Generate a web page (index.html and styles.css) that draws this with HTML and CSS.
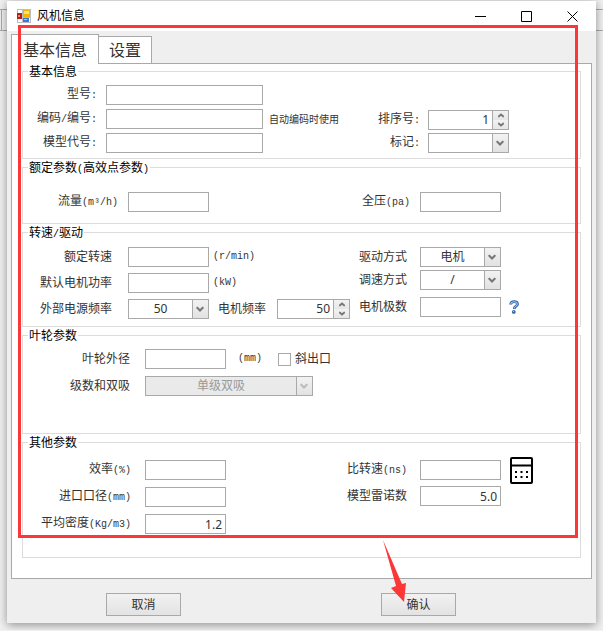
FILE: index.html
```html
<!DOCTYPE html>
<html lang="zh-CN">
<head>
<meta charset="utf-8">
<meta name="viewport" content="width=device-width, initial-scale=1">
<title>风机信息</title>
<link rel="stylesheet" href="styles.css">
</head>
<body>
<svg class="defs" aria-hidden="true">
  <symbol id="chevron" viewBox="0 0 8 6"><path d="M1 1v1l3 3 3-3V1M1 1l3 3 3-3" fill="none" stroke="currentColor" stroke-width="1.4"/></symbol>
  <symbol id="up" viewBox="0 0 6 5"><path d="M.6 4.200V3L3 .9 5.400 3v1.200M.6 4L3 2l2.400 2" fill="none" stroke="currentColor" stroke-width="1.1"/></symbol>
  <symbol id="down" viewBox="0 0 6 5"><path d="M.6 .8V2L3 4.100 5.400 2V.8M.6 1L3 3l2.400-2" fill="none" stroke="currentColor" stroke-width="1.1"/></symbol>
</svg>
<main class="dialog">
  <header class="titlebar">
    <svg class="app-icon" viewBox="0 0 14 14" aria-hidden="true">
      <rect width="14" height="14" fill="#b9bcc0"/>
      <rect x="1" y="1" width="4" height="3" fill="#fff"/>
      <rect x="1" y="10" width="4" height="3" fill="#fff"/>
      <rect x="6" y="1" width="7" height="7" fill="#f5b800"/>
      <rect x="7" y="2" width="5" height="3" fill="#ffe07a"/>
      <rect x="0" y="4" width="5" height="6" fill="#c01c10"/>
      <rect x="1" y="6" width="2" height="2" fill="#f08070"/>
      <rect x="6" y="9" width="6" height="4" fill="#3c78dc"/>
      <rect x="7" y="10" width="3" height="1" fill="#9cc4ff"/>
      <rect x="12" y="9" width="1" height="4" fill="#fff"/>
    </svg>
    <h1 class="title">风机信息</h1>
    <button class="winbtn" type="button" aria-label="最小化"><svg viewBox="0 0 11 11"><path d="M0 5.500h11"/></svg></button>
    <button class="winbtn" type="button" aria-label="最大化"><svg viewBox="0 0 11 11"><path d="M.5.5h10v10H.5z"/></svg></button>
    <button class="winbtn" type="button" aria-label="关闭"><svg viewBox="0 0 11 11"><path d="M.5.5l10 10M10.500.5l-10 10"/></svg></button>
  </header>

  <form class="body">
    <div class="tabs" role="tablist">
      <button class="tab tab-active" type="button" role="tab" aria-selected="true">基本信息</button>
      <button class="tab" type="button" role="tab" aria-selected="false">设置</button>
    </div>

    <div class="panel" role="tabpanel">
      <fieldset class="group basic">
        <legend>基本信息</legend>
        <div class="cols">
          <div class="col">
            <div class="row"><label for="model">型号<span class="lat">:</span></label><input class="box wide" id="model" type="text"></div>
            <div class="row"><label for="code">编码<span class="lat">/</span>编号<span class="lat">:</span></label><input class="box wide" id="code" type="text"><span class="note">自动编码时使用</span></div>
            <div class="row"><label for="alias">模型代号<span class="lat">:</span></label><input class="box wide" id="alias" type="text"></div>
          </div>
          <div class="col side">
            <div class="row"><label for="order">排序号<span class="lat">:</span></label>
              <span class="spin"><input id="order" type="number" value="1"><span class="steps"><button type="button" aria-label="增加"><svg><use href="#up"/></svg></button><button type="button" aria-label="减少"><svg><use href="#down"/></svg></button></span></span></div>
            <div class="row"><label for="mark">标记<span class="lat">:</span></label>
              <span class="combo"><select id="mark"><option></option></select><svg><use href="#chevron"/></svg></span></div>
          </div>
        </div>
      </fieldset>

      <fieldset class="group rated">
        <legend>额定参数<span class="lat">(</span>高效点参数<span class="lat">)</span></legend>
        <div class="cols">
          <div class="col">
            <div class="row"><label for="flow">流量<span class="lat">(m³/h)</span></label><input class="box" id="flow" type="text"></div>
          </div>
          <div class="col side">
            <div class="row"><label for="pressure">全压<span class="lat">(pa)</span></label><input class="box" id="pressure" type="text"></div>
          </div>
        </div>
      </fieldset>

      <fieldset class="group drive">
        <legend>转速<span class="lat">/</span>驱动</legend>
        <div class="cols">
          <div class="col">
            <div class="row"><label for="speed">额定转速</label><input class="box" id="speed" type="text"><span class="unit lat">(r/min)</span></div>
            <div class="row"><label for="power">默认电机功率</label><input class="box" id="power" type="text"><span class="unit lat">(kW)</span></div>
            <div class="row"><label for="supply">外部电源频率</label>
              <span class="combo"><select id="supply"><option>50</option></select><svg><use href="#chevron"/></svg></span>
              <label class="inline" for="freq">电机频率</label>
              <span class="spin small"><input id="freq" type="number" value="50"><span class="steps"><button type="button" aria-label="增加"><svg><use href="#up"/></svg></button><button type="button" aria-label="减少"><svg><use href="#down"/></svg></button></span></span></div>
          </div>
          <div class="col side">
            <div class="row"><label for="mode">驱动方式</label>
              <span class="combo"><select id="mode"><option>电机</option></select><svg><use href="#chevron"/></svg></span></div>
            <div class="row"><label for="regulate">调速方式</label>
              <span class="combo"><select id="regulate"><option>/</option></select><svg><use href="#chevron"/></svg></span></div>
            <div class="row apart"><label for="poles">电机极数</label><input class="box" id="poles" type="text">
              <svg class="help" viewBox="0 0 10 14" role="img" aria-label="帮助">
                <path d="M1.700 4.500C1.600 2.500 3 1.600 5 1.600s3.500.9 3.500 2.600C8.500 6.200 5.200 6.300 5.200 9" fill="none" stroke="#2f62a8" stroke-width="2.800"/>
                <path d="M1.800 4C2 2.500 3 1.700 5 1.700s3.300.9 3.300 2.400C8.300 6 5.200 6.300 5.200 8.600" fill="none" stroke="#9cc3ee" stroke-width="1.100"/>
                <circle cx="4.800" cy="11.900" r="1.900" fill="#2f62a8"/><circle cx="4.500" cy="11.500" r=".7" fill="#9cc3ee"/>
              </svg></div>
          </div>
        </div>
      </fieldset>

      <fieldset class="group impeller">
        <legend>叶轮参数</legend>
        <div class="col">
          <div class="row"><label for="diameter">叶轮外径</label><input class="box" id="diameter" type="text"><span class="unit far lat">(mm)</span><input class="tick" id="oblique" type="checkbox"><label class="ticklabel" for="oblique">斜出口</label></div>
          <div class="row"><label for="stage">级数和双吸</label>
            <span class="combo long"><select id="stage" disabled><option>单级双吸</option></select><svg><use href="#chevron"/></svg></span></div>
        </div>
      </fieldset>

      <fieldset class="group other">
        <legend>其他参数</legend>
        <div class="cols">
          <div class="col">
            <div class="row"><label for="eff">效率<span class="lat">(%)</span></label><input class="box" id="eff" type="text"></div>
            <div class="row"><label for="inlet">进口口径<span class="lat">(mm)</span></label><input class="box" id="inlet" type="text"></div>
            <div class="row"><label for="density">平均密度<span class="lat">(Kg/m3)</span></label><input class="box" id="density" type="text" value="1.2"></div>
          </div>
          <div class="col side">
            <div class="row"><label for="ns">比转速<span class="lat">(ns)</span></label><input class="box" id="ns" type="text">
              <button class="calc" type="button" aria-label="计算"><svg viewBox="0 0 23 27">
                <rect x="1" y="1" width="21" height="25" rx="1" fill="#fff" stroke="#000" stroke-width="2"/>
                <path d="M2 8.500h19" stroke="#000" stroke-width="2"/>
                <path d="M5 15h2m3.500 0h2m3.500 0h2M5 20h2m3.500 0h2m3.500 0h2" stroke="#000" stroke-width="2"/>
              </svg></button></div>
            <div class="row"><label for="reynolds">模型雷诺数</label><input class="box" id="reynolds" type="text" value="5.0"></div>
          </div>
        </div>
      </fieldset>
    </div>

    <footer class="actions">
      <button class="action" type="button">取消</button>
      <button class="action" type="submit">确认</button>
    </footer>
  </form>

  <div class="marker" aria-hidden="true"></div>
  <svg class="pointer" viewBox="0 0 26 62" aria-hidden="true"><path d="M2 0L21 44l4-1-2 19L10 48l5-2z" fill="#fc3737"/></svg>
</main>
</body>
</html>
```

FILE: styles.css
```css
* { box-sizing: border-box; }

body {
  margin: 0;
  padding: 1px 7px 7px;
  background:
    linear-gradient(#a9a9a9, #a9a9a9) 0 9px / 100% 1px no-repeat,
    linear-gradient(#a9a9a9, #a9a9a9) 0 30px / 100% 1px no-repeat,
    linear-gradient(#a9a9a9, #a9a9a9) 1px 10px / 1px 20px no-repeat,
    #f0f0f0;
  font: 12px/16px "Noto Sans", "Noto Sans CJK SC", sans-serif;
  color: #333;
}

button, input, select { font: inherit; color: inherit; }
button { padding: 0; }
.defs { display: none; }

.dialog {
  position: relative;
  background: #efefef;
  box-shadow: 0 2px 9px rgba(0, 0, 0, .4);
}

.titlebar {
  display: flex;
  align-items: center;
  height: 30px;
  padding: 0 1px 0 10px;
  background: #fff;
}
.app-icon { width: 14px; height: 14px; }
.title { flex: 1; margin: 0 0 0 6px; font-size: 12px; font-weight: 400; color: #000; }
.winbtn {
  display: flex;
  align-items: center;
  justify-content: center;
  width: 46px;
  height: 30px;
  border: 0;
  background: none;
}
.winbtn svg { width: 11px; height: 11px; fill: none; stroke: #000; }

.body { padding: 3px 4px 7px; }

.tabs { display: flex; align-items: flex-end; }
.tab {
  height: 27px;
  padding: 0 10px;
  border: 1px solid #a9a9a9;
  border-left: 0;
  border-bottom: 0;
  background: #fff;
  font-size: 16px;
  line-height: 24px;
}
.tab-active {
  position: relative;
  height: 30px;
  margin-bottom: -1px;
  padding: 0 11px;
  border-left: 1px solid #a9a9a9;
}

.panel { padding: 0 10px 20px; border: 1px solid #a9a9a9; background: #fff; }

.group { min-width: 0; margin: 0; padding: 0; border: 1px solid #dcdcdc; }
.group + .group { margin-top: 1px; }
legend { height: 15px; margin-left: 5px; padding: 0 1px; line-height: 15px; color: #000; }

.cols { display: grid; grid-template-columns: minmax(0, 1fr) 237px; }
.col { display: flex; flex-direction: column; gap: 6px; }
.row { display: flex; align-items: center; height: 20px; }
.row > label:first-child {
  flex: none;
  width: 89px;
  margin-right: 16px;
  text-align: right;
  white-space: nowrap;
}
.side .row > label:first-child { width: 64px; margin-right: 13px; }
.apart { margin-top: 4px; }

.basic .cols { padding: 6px 0 5px; }
.basic .col { gap: 4px; }
.basic .row > label:first-child { width: 74px; margin-right: 9px; }
.basic .side { gap: 3px; padding-top: 25px; }
.basic .side .row > label:first-child { width: 77px; margin-right: 8px; }

.rated .cols { padding: 17px 0 11px; }
.rated .row > label:first-child { width: 95px; margin-right: 10px; }
.rated .side .row > label:first-child { width: 67px; margin-right: 10px; }

.drive .cols { padding: 7px 0; }
.drive .side { gap: 3px; }

.impeller .col { gap: 7px; padding: 6px 0 37px; }
.impeller .row > label:first-child { width: 107px; margin-right: 15px; }

.other .cols { padding: 10px 0 23px; }
.other .col { gap: 7px; }
.other .side { gap: 6px; }
.other .row > label:first-child { width: 108px; margin-right: 14px; }
.other .side .row > label:first-child { width: 64px; margin-right: 13px; }

.lat { font-family: "Liberation Mono", monospace; font-size: 10px; }
.note { margin-left: 6px; font-size: 10px; white-space: nowrap; }
.unit { margin-left: 4px; }
.unit.far { margin-left: 12px; }
.row > .inline { flex: none; margin: 0 11px 0 9px; white-space: nowrap; }

.box, .combo, .spin {
  flex: none;
  width: 81px;
  height: 20px;
  border: 1px solid #a9a9a9;
  border-radius: 0;
  background: #fff;
}
.box { padding: 0 3px; text-align: right; }
.wide { width: 157px; }
.small { width: 73px; }
.long { width: 168px; }

.combo { display: flex; position: relative; }
.combo select {
  width: 100%;
  height: 18px;
  padding: 0 16px 0 0;
  border: 0;
  border-radius: 0;
  appearance: none;
  background: linear-gradient(#f2f2f2, #e2e2e2) right / 15px 100% no-repeat,
    linear-gradient(#a9a9a9, #a9a9a9) right / 16px 100% no-repeat, #fff;
  text-align: center;
  text-align-last: center;
}
.combo select:disabled { color: #999; opacity: 1; background-color: #eaeaea; }
.combo svg {
  position: absolute;
  top: 6px;
  right: 4px;
  width: 8px;
  height: 6px;
  color: #777;
  pointer-events: none;
}
.combo select:disabled + svg { color: #bbb; }

.spin { display: flex; }
.spin input {
  flex: 1;
  min-width: 0;
  padding: 0 3px;
  border: 0;
  background: none;
  text-align: right;
  appearance: textfield;
}
.spin input::-webkit-inner-spin-button { display: none; }
.steps { display: flex; flex-direction: column; width: 16px; border-left: 1px solid #a9a9a9; }
.steps button {
  display: flex;
  flex: 1;
  align-items: center;
  justify-content: center;
  border: 0;
  background: linear-gradient(#f2f2f2, #e6e6e6);
}
.steps svg { width: 6px; height: 5px; color: #777; }

.tick {
  width: 13px;
  height: 13px;
  margin: 0 4px 0 16px;
  border: 1px solid #a9a9a9;
  appearance: none;
  background: #fff;
}
.tick:checked { background: #777; }

.help { width: 10px; height: 14px; margin-left: 8px; }
.calc { height: 27px; margin-left: 9px; border: 0; background: none; }
.calc svg { display: block; width: 23px; height: 27px; }

.actions { display: flex; justify-content: space-between; padding: 14px 136px 0 95px; }
.action {
  width: 75px;
  height: 23px;
  border: 1px solid #a9a9a9;
  background: linear-gradient(#f1f1f1, #e3e3e3);
}

.marker {
  position: absolute;
  inset: 24px 18px 85px 11px;
  border: 3px solid #fc3737;
  pointer-events: none;
}
.pointer {
  position: absolute;
  right: 189px;
  bottom: 21px;
  width: 26px;
  height: 62px;
  pointer-events: none;
}
```
